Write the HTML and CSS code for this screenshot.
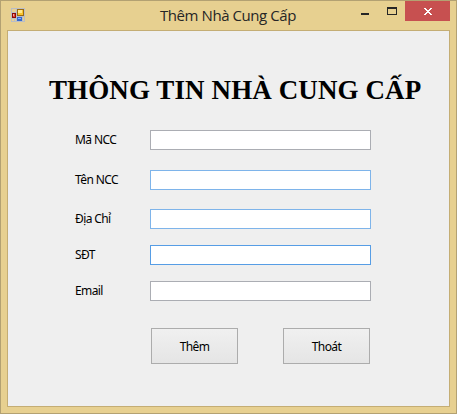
FILE: index.html
```html
<!DOCTYPE html>
<html lang="vi">
<head>
<meta charset="utf-8">
<title>Thêm Nhà Cung Cấp</title>
<link rel="stylesheet" href="styles.css">
</head>
<body>
<div class="window">
  <header class="titlebar">
    <svg class="app-icon" width="14" height="14" viewBox="0 0 14 14" shape-rendering="crispEdges">
      <path fill="#b9bdc6" d="M0 0h14v14H0z"/>
      <path fill="#e7d090" d="M1 1h4v3H1zM1 11h2v2H1zM4 11h1v2H4zM12 9h1v4h-1z"/>
      <path fill="#8c0a08" d="M1 5h4v5H1z"/>
      <path fill="#e0443a" d="M2 6h2v3H2z"/>
      <path fill="#f3a59b" d="M2 6h1v2H2z"/>
      <path fill="#9a6a10" d="M6 1h7v7H6z"/>
      <path fill="#f9c52d" d="M7 2h5v5H7z"/>
      <path fill="#ffe88c" d="M7 2h4v3H7z"/>
      <path fill="#3468cf" d="M6 9h5v4H6z"/>
      <path fill="#82b2ff" d="M7 10h3v1H7z"/>
    </svg>
    <span class="title">Thêm Nhà Cung Cấp</span>
    <div class="controls">
      <svg class="minmax" width="36" height="8" viewBox="0 0 36 8" shape-rendering="crispEdges">
        <path fill="#262626" d="M0 6h8v2H0z"/>
        <path fill="#262626" fill-rule="evenodd" d="M26 0h10v8H26zM27 2v5h8V2z"/>
      </svg>
      <div class="close">
        <svg width="8" height="7" viewBox="0 0 8 7" shape-rendering="crispEdges">
          <path fill="#fff" d="M0 0h2v1h1v1h2V1h1V0h2v1H7v1H6v1H5v1h1v1h1v1h1v1H6V6H5V5H3v1H2v1H0V6h1V5h1V4h1V3H2V2H1V1H0z"/>
        </svg>
      </div>
    </div>
  </header>
  <main class="client">
    <h1 class="heading">THÔNG TIN NHÀ CUNG CẤP</h1>
    <form class="form">
      <label class="row"><span>Mã NCC</span><input type="text"></label>
      <label class="row"><span>Tên NCC</span><input class="hot" type="text"></label>
      <label class="row"><span>Địa Chỉ</span><input class="hot" type="text"></label>
      <label class="row"><span>SĐT</span><input class="focused" type="text"></label>
      <label class="row"><span>Email</span><input type="text"></label>
      <div class="buttons">
        <button type="button">Thêm</button>
        <button type="button">Thoát</button>
      </div>
    </form>
  </main>
</div>
</body>
</html>
```

FILE: styles.css
```css
* { box-sizing: border-box; }
body { margin: 0; }
.window {
  width: 457px;
  height: 414px;
  padding: 0 6px 6px;
  border: 1px solid #b3a172;
  background: #e7d090;
  font-family: "Noto Sans", "Open Sans", sans-serif;
}
.titlebar {
  display: flex;
  height: 29px;
  padding-left: 4px;
}
.app-icon { margin-top: 7px; flex: none; }
.title {
  flex: 1;
  padding-left: 135px;
  font: 15px/29px "Open Sans", "Noto Sans", sans-serif;
  letter-spacing: -0.43px;
  color: #262626;
  white-space: nowrap;
}
.controls { display: flex; flex: none; }
.minmax { margin: 6px 8px 0 0; }
.close {
  display: flex;
  align-items: center;
  justify-content: center;
  width: 45px;
  height: 20px;
  padding-top: 1px;
  background: #c75050;
}
.client {
  height: 377px;
  border: 1px solid #c4ad74;
  background: #efefef;
}
.heading {
  margin: 0;
  padding: 43px 0 0 41px;
  height: 99px;
  font: bold 27px/32px "Liberation Serif", serif;
  letter-spacing: 0.1px;
  white-space: nowrap;
  color: #000;
}
.form {
  display: grid;
  grid-template-rows: 40px 39px 36px 36px 47px 36px;
  padding-left: 67px;
}
.row { display: flex; height: 20px; }
.row span {
  width: 75px;
  font-size: 12px;
  line-height: 20px;
  letter-spacing: -0.6px;
  white-space: nowrap;
  color: #000;
}
input {
  width: 221px;
  height: 20px;
  padding: 0 3px;
  border: 1px solid #abadb3;
  border-radius: 0;
  background: #fff;
  font: 12px "Noto Sans", sans-serif;
  outline: 0;
}
.hot { border-color: #7eb4ea; }
.focused { border-color: #569de5; }
.buttons { display: flex; gap: 45px; padding-left: 76px; }
button {
  width: 87px;
  height: 36px;
  padding: 0;
  border: 1px solid #acacac;
  background: linear-gradient(#f0f0f0, #e5e5e5);
  color: #000;
  font: 12px "Noto Sans", sans-serif;
  letter-spacing: -0.6px;
}
```
